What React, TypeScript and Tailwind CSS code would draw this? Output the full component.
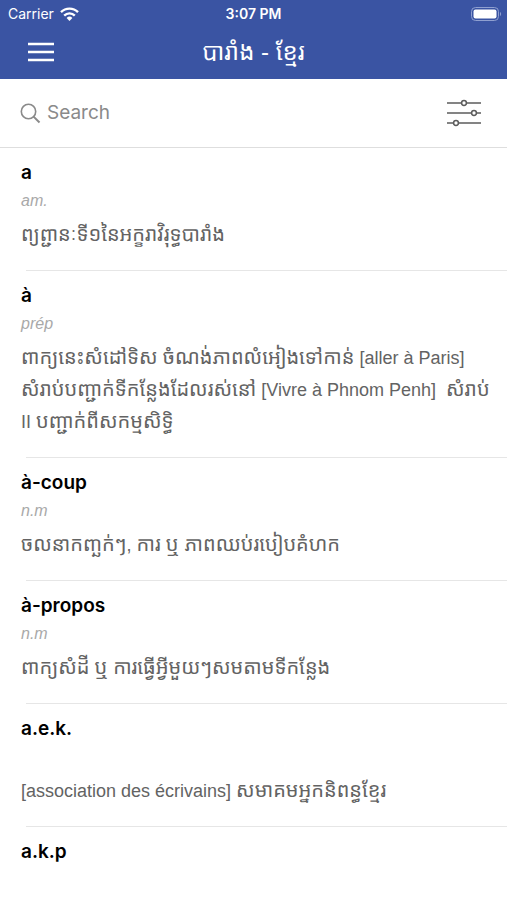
import React, { useState } from "react";

type Entry = {
  word: string;
  kind: string;
  lines: string[];
};

const entries: Entry[] = [
  { word: "a", kind: "am.", lines: ["ព្យព្ជានៈទី១នៃអក្ខរាវិរុទ្ធបារាំង"] },
  {
    word: "à",
    kind: "prép",
    lines: [
      "ពាក្យនេះសំដៅទិស ចំណង់ភាពលំអៀងទៅកាន់ [aller à Paris]",
      "សំរាប់បញ្ជាក់ទីកន្លែងដែលរស់នៅ [Vivre à Phnom Penh]\u00a0 សំរាប់",
      "II បញ្ជាក់ពីសកម្មសិទ្ធិ",
    ],
  },
  { word: "à-coup", kind: "n.m", lines: ["ចលនាកញ្ឆក់ៗ, ការ ឬ ភាពឈប់របៀបគំហក"] },
  { word: "à-propos", kind: "n.m", lines: ["ពាក្យសំដី ឬ ការធ្វើអ្វីមួយៗសមតាមទីកន្លែង"] },
  { word: "a.e.k.", kind: "", lines: ["[association des écrivains] សមាគមអ្នកនិពន្ធខ្មែរ"] },
  { word: "a.k.p", kind: "", lines: ["[agence kampuchéa presse] ទីភ្នាក់ងារសារព័ត៌មានកម្ពុជា"] },
];

const StatusBar = () => (
  <div className="grid grid-cols-3 items-center h-7 px-2 text-sm">
    <div className="flex items-center gap-1.5">
      <span>Carrier</span>
      <svg width="19" height="14" viewBox="0 0 19 14" fill="none" stroke="white" strokeWidth="2.4" aria-hidden="true">
        <path d="M1 5.2a12 12 0 0 1 17 0" />
        <path d="M4.2 8.6a7.5 7.5 0 0 1 10.6 0" />
        <path d="M9.5 14 6.6 11a4.1 4.1 0 0 1 5.8 0Z" fill="white" stroke="none" />
      </svg>
    </div>
    <div className="text-center font-semibold">3:07 PM</div>
    <svg className="justify-self-end -mr-1" width="32" height="14" viewBox="0 0 32 14" aria-hidden="true">
      <rect x="0.5" y="0.5" width="27" height="13" rx="4" fill="none" stroke="#8fa0d0" />
      <rect x="2.5" y="2.5" width="23" height="9" rx="2" fill="white" />
      <path d="M29 5v4c1.5-.5 1.5-3.5 0-4Z" fill="#8fa0d0" />
    </svg>
  </div>
);

// Latin parts and spaces are set a bit smaller than the Khmer text around them
const Definition = ({ line }: { line: string }) => (
  <span className="block">
    {line.split(/([^\u1780-\u17ff]+)/).map((part, i) =>
      i % 2 ? (
        <span key={i} className="text-lg leading-none">
          {part}
        </span>
      ) : (
        part
      )
    )}
  </span>
);

const EntryRow = ({ entry }: { entry: Entry }) => (
  <li className="pl-[21px]">
    <h2 className="pt-[13px] text-[19px] leading-6 font-semibold text-black">{entry.word}</h2>
    <p className="h-[33px] pt-1 font-['Liberation_Sans',sans-serif] text-base leading-6 italic text-[#a9a9a9]">{entry.kind}</p>
    <p className="font-['Liberation_Sans','Noto_Sans_Khmer',sans-serif] text-xl leading-8 whitespace-nowrap text-[#636363]">
      {entry.lines.map((line) => (
        <Definition key={line} line={line} />
      ))}
    </p>
    <div className="mt-5 ml-[5px] border-b border-[#e6e6e6]" />
  </li>
);

const App = () => {
  const [query, setQuery] = useState("");

  return (
    <div className="h-screen overflow-hidden bg-white font-['Inter','Noto_Sans_Khmer',sans-serif]">
      <header className="bg-[#3a54a3] text-white">
        <StatusBar />
        <div className="grid grid-cols-[64px_1fr_64px] items-center h-[51px] pb-1">
          <button type="button" aria-label="Menu" className="justify-self-end mr-2.5">
            <svg width="26" height="20" viewBox="0 0 26 20" stroke="white" strokeWidth="2.4" aria-hidden="true">
              <path d="M0 2h26M0 10h26M0 18h26" />
            </svg>
          </button>
          <h1 className="text-center font-['Liberation_Sans','Noto_Sans_Khmer',sans-serif] text-2xl">បារាំង - ខ្មែរ</h1>
        </div>
      </header>
      <div className="flex items-center h-[69px] pl-5 pr-6 border-b border-[#dedede]">
        <label htmlFor="search" aria-label="Search">
          <svg width="21" height="21" viewBox="0 0 21 21" fill="none" stroke="#8a8a8a" strokeWidth="1.6" aria-hidden="true">
            <circle cx="8.5" cy="8.5" r="7.2" />
            <path d="m13.6 13.6 5.9 5.9" strokeWidth="2" />
          </svg>
        </label>
        <input
          id="search"
          type="text"
          value={query}
          onChange={(e) => setQuery(e.target.value)}
          placeholder="Search"
          className="flex-1 min-w-0 ml-1.5 text-[19px] text-gray-800 outline-none placeholder:text-[#8a8a8a]"
        />
        <button type="button" aria-label="Filters">
          <svg width="36" height="28" viewBox="0 0 36 28" fill="white" stroke="#5c5c5c" strokeWidth="1.5" aria-hidden="true">
            <path d="M0 4h34M0 14h34M0 24h34" />
            <circle cx="17" cy="4" r="2.4" />
            <circle cx="27" cy="14" r="2.4" />
            <circle cx="9" cy="24" r="2.4" />
          </svg>
        </button>
      </div>
      <ul>
        {entries.map((entry) => (
          <EntryRow key={entry.word} entry={entry} />
        ))}
      </ul>
    </div>
  );
};

export default App;
